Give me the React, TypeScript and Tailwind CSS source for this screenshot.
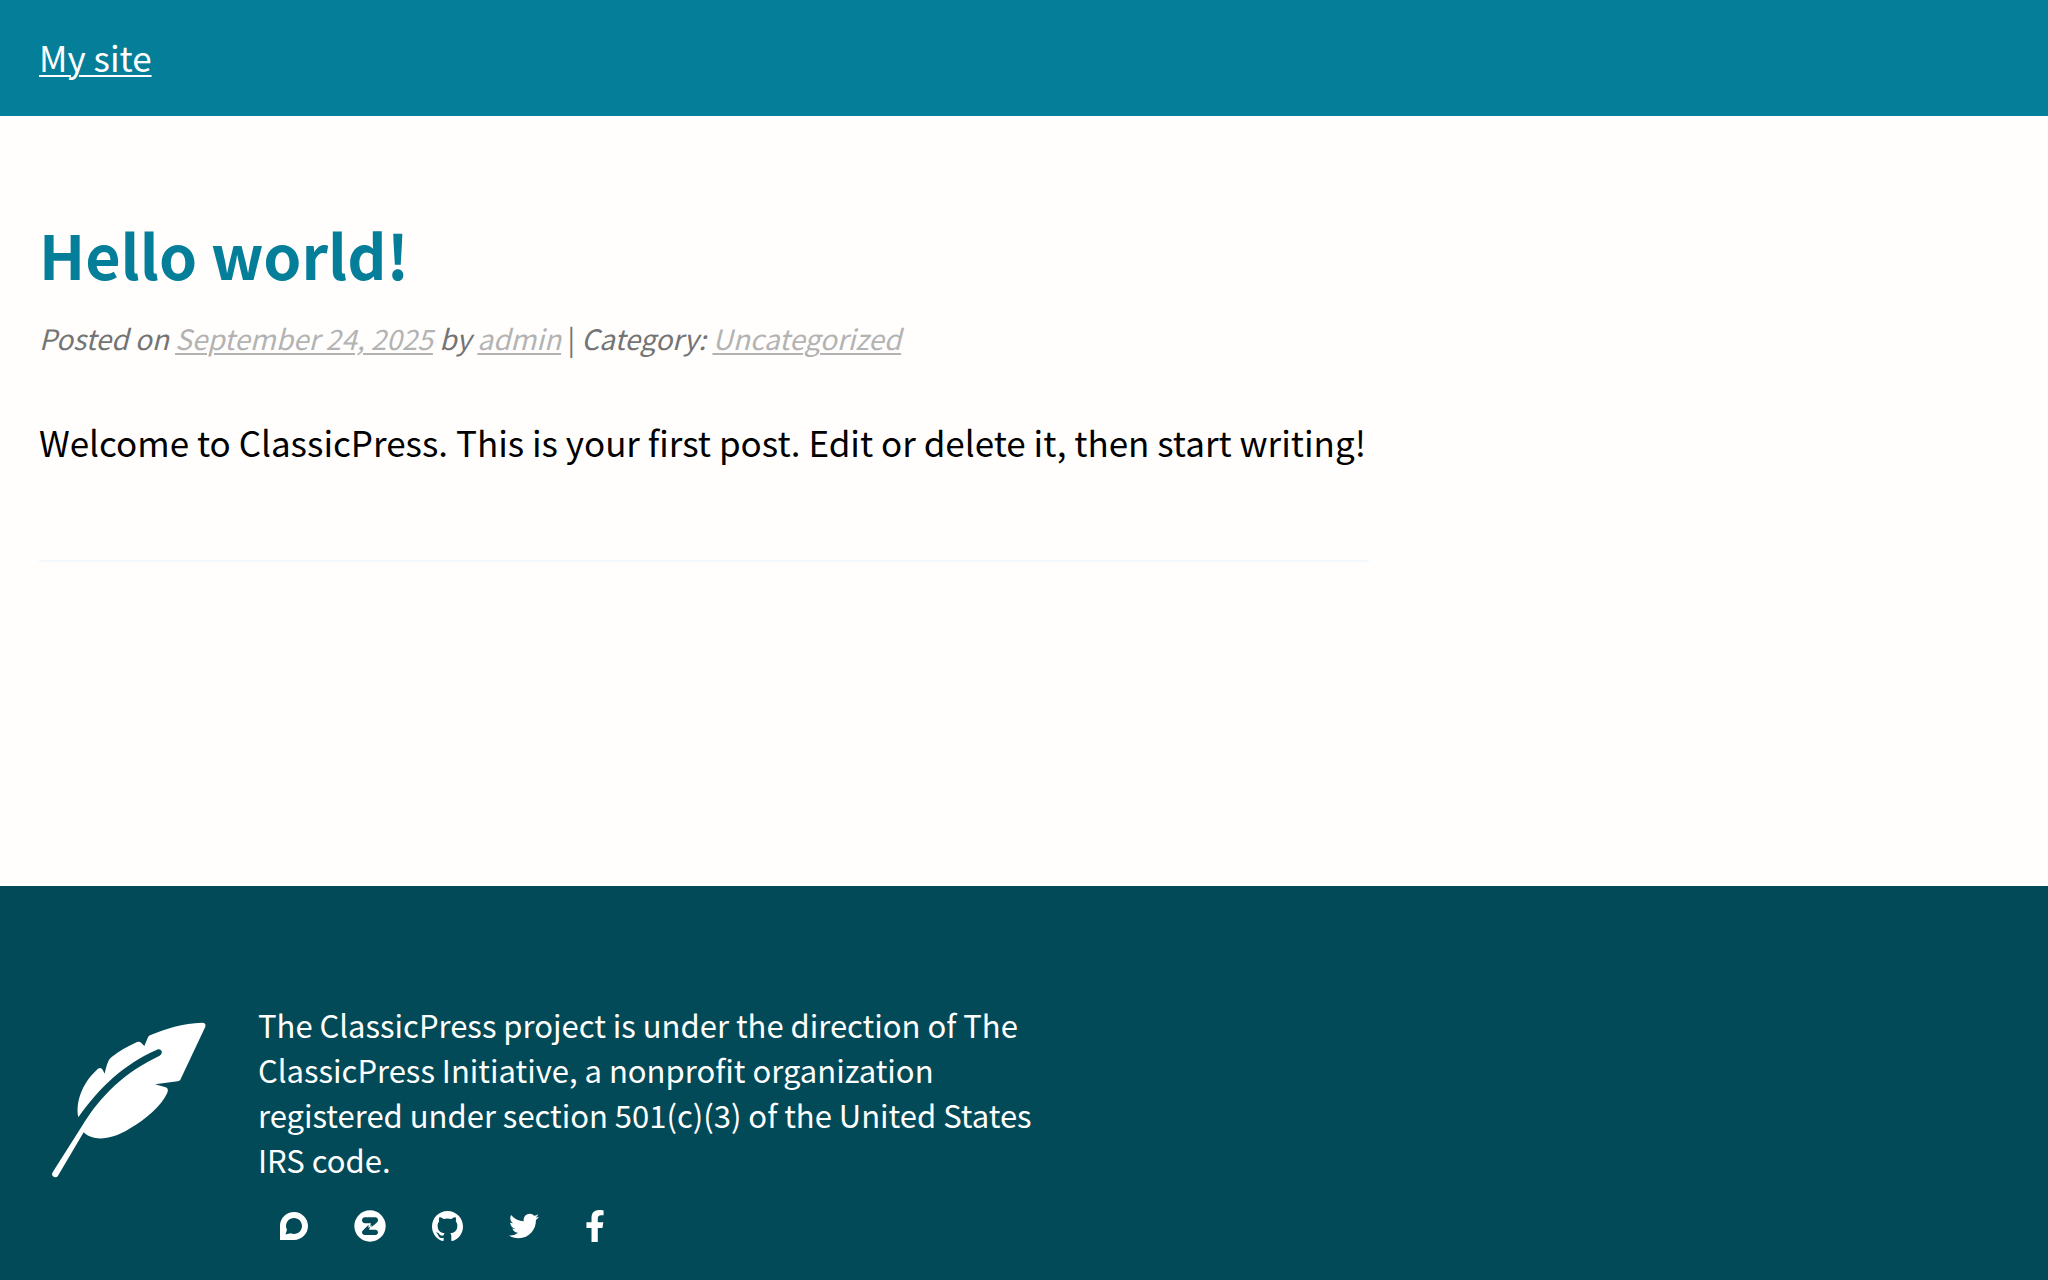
import type { ReactNode } from 'react';
import { FaDiscourse, FaFacebookF, FaTwitter } from 'react-icons/fa';
import { SiGithub } from 'react-icons/si';

const ZulipIcon = () => (
  <svg viewBox="0 0 96 96" className="size-8" fill="currentColor" aria-hidden="true">
    <path
      fillRule="evenodd"
      d="M48 1a47 47 0 1 1 0 94a47 47 0 0 1 0-94zM33 22c-6 0-9 5-9 9s3 9 9 9h18l-3 10 6-5-2 7 16-14c3-3 4-5 4-8 0-5-4-8-8-8zM44 44L28 60c-3 3-4 5-4 7 0 5 4 8 8 8h32c6 0 8-4 8-8s-3-8-8-8H45l4-10-6 5z"
    />
  </svg>
);

const FeatherLogo = () => (
  <svg viewBox="0 0 480 480" className="size-40" fill="currentColor" aria-hidden="true">
    <path d="M456 8C400 10 345 26 300 46Q296 48 294 52L283 78L274 69Q269 63 261 66C232 79 206 94 184 112C173 121 169 140 164 161L158 149Q153 141 144 146C102 183 75 240 85 292C145 205 222 132 321 89C335 84 341 101 329 107C225 156 152 226 96 318L8 457C1 469 17 477 24 467L101 337C130 366 185 359 237 327C287 298 334 258 352 218Q357 206 347 202L315 193L383 184Q389 183 391 179L466 20Q469 8 456 8Z" />
  </svg>
);

const socials: { label: string; icon: ReactNode }[] = [
  { label: 'Forums', icon: <FaDiscourse className="h-8 w-7" /> },
  { label: 'Zulip', icon: <ZulipIcon /> },
  { label: 'GitHub', icon: <SiGithub className="h-8 w-[31px]" /> },
  { label: 'Twitter', icon: <FaTwitter className="h-8 w-[30px]" /> },
  { label: 'Facebook', icon: <FaFacebookF className="h-8 w-5" /> },
];

const App = () => {
  return (
    <div className="flex min-h-screen flex-col bg-[#fffefd] font-['Source_Sans_Pro','Noto_Sans_CJK_JP',sans-serif] text-black">
      <header className="bg-[#057f99] px-[39px] pt-[31px] pb-[33px] text-white">
        <a href="#" className="text-[35px] leading-[52px] underline decoration-2 underline-offset-3">
          My site
        </a>
      </header>

      <main className="grow px-[39px] pt-[94px] pb-80">
        <article className="max-w-[1330px] border-b-2 border-[#f2f8fc] pb-22">
          <h1 className="text-[61px] leading-[88px] font-bold text-[#057f99]">Hello world!</h1>
          <p className="mt-[18px] text-[28px] leading-[44px] text-[#747474] italic">
            Posted on{' '}
            <a href="#" className="text-[#b3b3b3] underline decoration-2 underline-offset-3">September 24, 2025</a>{' '}
            by{' '}
            <a href="#" className="text-[#b3b3b3] underline decoration-2 underline-offset-3">admin</a>{' '}
            <span className="not-italic">|</span> Category:{' '}
            <a href="#" className="text-[#b3b3b3] underline decoration-2 underline-offset-3">Uncategorized</a>
          </p>
          <p className="mt-[52px] text-[35px] leading-[60px]">
            Welcome to ClassicPress. This is your first post. Edit or delete it, then start writing!
          </p>
        </article>
      </main>

      <footer className="flex gap-12 bg-[#024a57] px-[50px] pt-29 pb-[38px] text-white">
        <a href="#" aria-label="ClassicPress" className="mt-[18px] shrink-0">
          <FeatherLogo />
        </a>
        <div className="max-w-[800px]">
          <p className="text-[31px] leading-[45px]">
            The ClassicPress project is under the direction of The ClassicPress Initiative, a nonprofit
            organization registered under section 501(c)(3) of the United States IRS code.
          </p>
          <ul className="mt-7 flex gap-[46px] pl-[22px]">
            {socials.map((s) => (
              <li key={s.label}>
                <a href="#" aria-label={s.label} className="block">
                  {s.icon}
                </a>
              </li>
            ))}
          </ul>
        </div>
      </footer>
    </div>
  );
};

export default App;
